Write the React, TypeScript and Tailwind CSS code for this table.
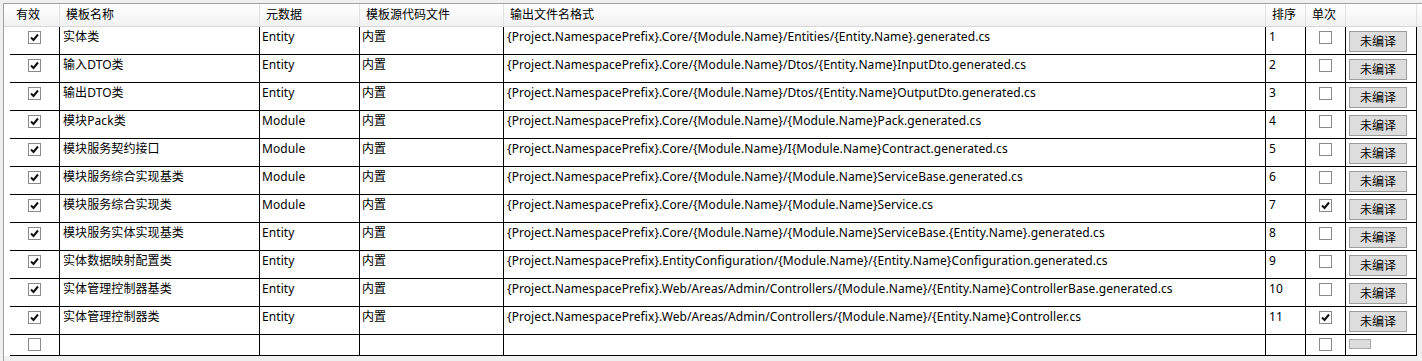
import React from "react";

type Row = {
  name: string;
  meta: string;
  src: string;
  out: string;
  order: string;
  single: boolean;
};

const rows: Row[] = [
  { name: "实体类", meta: "Entity", src: "内置", out: "{Project.NamespacePrefix}.Core/{Module.Name}/Entities/{Entity.Name}.generated.cs", order: "1", single: false },
  { name: "输入DTO类", meta: "Entity", src: "内置", out: "{Project.NamespacePrefix}.Core/{Module.Name}/Dtos/{Entity.Name}InputDto.generated.cs", order: "2", single: false },
  { name: "输出DTO类", meta: "Entity", src: "内置", out: "{Project.NamespacePrefix}.Core/{Module.Name}/Dtos/{Entity.Name}OutputDto.generated.cs", order: "3", single: false },
  { name: "模块Pack类", meta: "Module", src: "内置", out: "{Project.NamespacePrefix}.Core/{Module.Name}/{Module.Name}Pack.generated.cs", order: "4", single: false },
  { name: "模块服务契约接口", meta: "Module", src: "内置", out: "{Project.NamespacePrefix}.Core/{Module.Name}/I{Module.Name}Contract.generated.cs", order: "5", single: false },
  { name: "模块服务综合实现基类", meta: "Module", src: "内置", out: "{Project.NamespacePrefix}.Core/{Module.Name}/{Module.Name}ServiceBase.generated.cs", order: "6", single: false },
  { name: "模块服务综合实现类", meta: "Module", src: "内置", out: "{Project.NamespacePrefix}.Core/{Module.Name}/{Module.Name}Service.cs", order: "7", single: true },
  { name: "模块服务实体实现基类", meta: "Entity", src: "内置", out: "{Project.NamespacePrefix}.Core/{Module.Name}/{Module.Name}ServiceBase.{Entity.Name}.generated.cs", order: "8", single: false },
  { name: "实体数据映射配置类", meta: "Entity", src: "内置", out: "{Project.NamespacePrefix}.EntityConfiguration/{Module.Name}/{Entity.Name}Configuration.generated.cs", order: "9", single: false },
  { name: "实体管理控制器基类", meta: "Entity", src: "内置", out: "{Project.NamespacePrefix}.Web/Areas/Admin/Controllers/{Module.Name}/{Entity.Name}ControllerBase.generated.cs", order: "10", single: false },
  { name: "实体管理控制器类", meta: "Entity", src: "内置", out: "{Project.NamespacePrefix}.Web/Areas/Admin/Controllers/{Module.Name}/{Entity.Name}Controller.cs", order: "11", single: true },
];

function CheckBox({ checked }: { checked: boolean }) {
  return (
    <div className="w-[13px] h-[13px] border border-[#8a8a8a] bg-white flex items-center justify-center">
      {checked && (
        <svg width="9" height="9" viewBox="0 0 9 9">
          <path d="M1 4.5 L3.5 7 L8 1.5" fill="none" stroke="#111111" strokeWidth="2" />
        </svg>
      )}
    </div>
  );
}

function Btn({ label }: { label?: string }) {
  if (!label) {
    return <div className="w-[22px] h-[10px] border border-[#a8a8a8] bg-[#dcdcdc]" />;
  }
  return (
    <div className="w-[58px] h-[21px] border border-[#9c9c9c] bg-[#dddddd] flex items-center justify-center text-[12px] leading-none text-black">
      {label}
    </div>
  );
}

const font = { fontFamily: '"Noto Sans", "Noto Sans CJK SC", sans-serif' };

export default function App() {
  const headCell = "h-full flex items-center pl-[6px] border-r border-[#e2e2e2] shrink-0";
  const cell = "h-full border-r border-b border-black shrink-0 overflow-hidden whitespace-nowrap";
  return (
    <div className="w-[1422px] h-[361px] bg-[#f0f0f0] pt-[3px] pl-[3px] overflow-hidden text-[12px] text-black" style={font}>
      <div className="border-l border-t border-[#a0a0a0] h-full flex flex-col">
        {/* header */}
        <div className="h-[23px] flex bg-gradient-to-b from-[#ffffff] to-[#f1f1f1] border-b border-[#d8d8d8] shrink-0">
          <div className="w-[6px] shrink-0" />
          <div className={`${headCell} w-[50px]`}>有效</div>
          <div className={`${headCell} w-[200px]`}>模板名称</div>
          <div className={`${headCell} w-[100px]`}>元数据</div>
          <div className={`${headCell} w-[144px]`}>模板源代码文件</div>
          <div className={`${headCell} w-[762px]`}>输出文件名格式</div>
          <div className={`${headCell} w-[40px]`}>排序</div>
          <div className={`${headCell} w-[40px]`}>单次</div>
          <div className={`${headCell} w-[71px]`} />
          <div className="flex-1" />
        </div>
        {/* body */}
        {rows.map((r, i) => (
          <div key={i} className="h-[28px] flex shrink-0 tracking-[0.08px]">
            <div className="w-[6px] shrink-0 bg-white" />
            <div className={`${cell} w-[50px] bg-white flex justify-center pt-[4px]`}>
              <CheckBox checked={true} />
            </div>
            <div className={`${cell} w-[200px] bg-white pl-[3px] pt-[2px] leading-[16px]`}>{r.name}</div>
            <div className={`${cell} w-[100px] bg-white pl-[2px] pt-[2px] leading-[16px]`}>{r.meta}</div>
            <div className={`${cell} w-[144px] bg-white pl-[2px] pt-[2px] leading-[16px]`}>{r.src}</div>
            <div className={`${cell} w-[762px] bg-white pl-[3px] pt-[2px] leading-[16px]`}>{r.out}</div>
            <div className={`${cell} w-[40px] bg-white pl-[3px] pt-[2px] leading-[16px]`}>{r.order}</div>
            <div className={`${cell} w-[40px] bg-white flex justify-center pt-[4px]`}>
              <CheckBox checked={r.single} />
            </div>
            <div className={`${cell} w-[71px] bg-white pl-[3px] pt-[4px]`}>
              <Btn label="未编译" />
            </div>
          </div>
        ))}
        <div className="h-[21px] flex shrink-0">
          <div className="w-[6px] shrink-0 bg-white" />
          <div className={`${cell} w-[50px] bg-white flex justify-center pt-[3px]`}>
            <CheckBox checked={false} />
          </div>
          <div className={`${cell} w-[200px] bg-white`} />
          <div className={`${cell} w-[100px] bg-white`} />
          <div className={`${cell} w-[144px] bg-white`} />
          <div className={`${cell} w-[762px] bg-white`} />
          <div className={`${cell} w-[40px] bg-white`} />
          <div className={`${cell} w-[40px] bg-white flex justify-center pt-[3px]`}>
            <CheckBox checked={false} />
          </div>
          <div className={`${cell} w-[71px] bg-white pl-[3px] pt-[4px]`}>
            <Btn />
          </div>
        </div>
      </div>
    </div>
  );
}
